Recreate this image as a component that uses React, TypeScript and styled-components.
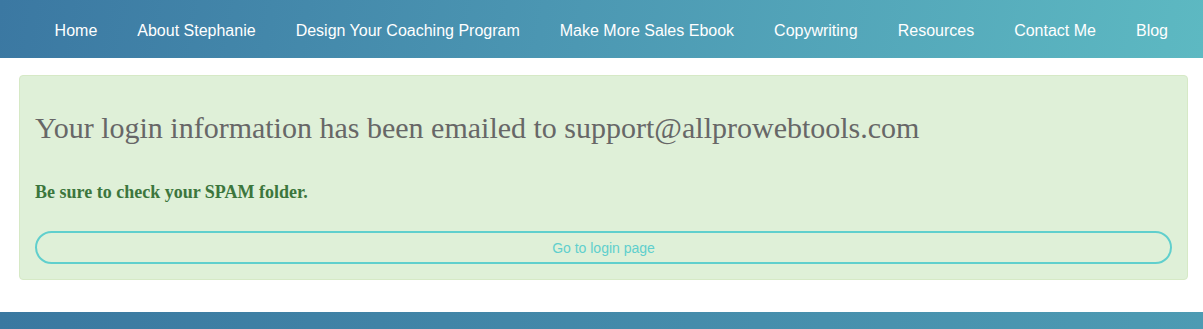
import React from 'react';
import styled, { createGlobalStyle } from 'styled-components';

const GlobalStyle = createGlobalStyle`
  html, body {
    margin: 0;
    padding: 0;
    background: #ffffff;
    font-family: "Liberation Sans", Arial, sans-serif;
  }
`;

const NAV_ITEMS = [
  'Home',
  'About Stephanie',
  'Design Your Coaching Program',
  'Make More Sales Ebook',
  'Copywriting',
  'Resources',
  'Contact Me',
  'Blog',
];

const Page = styled.div`
  display: flex;
  flex-direction: column;
  min-height: 329px;
`;

const NavBar = styled.nav`
  height: 58px;
  box-sizing: border-box;
  padding: 4px 15px 0 0;
  display: flex;
  align-items: center;
  justify-content: flex-end;
  background: linear-gradient(100deg, #3b78a2 0%, #4b96b2 45%, #5db9c2 100%);
`;

const NavLink = styled.a`
  padding: 0 20px;
  color: #ffffff;
  font-size: 16px;
  line-height: 20px;
  text-decoration: none;
  white-space: nowrap;
`;

const Main = styled.main`
  padding: 17px 15px 32px 19px;
`;

const Alert = styled.div`
  background: #dff0d8;
  border: 1px solid #d6e9c6;
  border-radius: 4px;
  padding: 15px;
`;

const Heading = styled.h3`
  margin: 20px 0 0;
  font-family: "Liberation Serif", "Times New Roman", serif;
  font-weight: normal;
  font-size: 30px;
  line-height: 33px;
  color: #676767;
`;

const Note = styled.p`
  margin: 36px 0 0;
  font-family: "Liberation Serif", "Times New Roman", serif;
  font-weight: bold;
  font-size: 18px;
  line-height: 24px;
  color: #3c763d;
`;

const LoginButton = styled.button`
  display: block;
  width: 100%;
  height: 33px;
  margin-top: 27px;
  border: 2px solid #60cfcd;
  border-radius: 17px;
  background: transparent;
  color: #60cfcd;
  font-family: "Liberation Sans", Arial, sans-serif;
  font-size: 14px;
  cursor: pointer;
`;

const Footer = styled.footer`
  height: 17px;
  flex: 1;
  background: linear-gradient(100deg, #3a78a0 0%, #4d9bb3 100%);
`;

export default function App() {
  return (
    <Page>
      <GlobalStyle />
      <NavBar>
        {NAV_ITEMS.map((item) => (
          <NavLink key={item} href="#">
            {item}
          </NavLink>
        ))}
      </NavBar>
      <Main>
        <Alert>
          <Heading>Your login information has been emailed to support@allprowebtools.com</Heading>
          <Note>Be sure to check your SPAM folder.</Note>
          <LoginButton>Go to login page</LoginButton>
        </Alert>
      </Main>
      <Footer />
    </Page>
  );
}
